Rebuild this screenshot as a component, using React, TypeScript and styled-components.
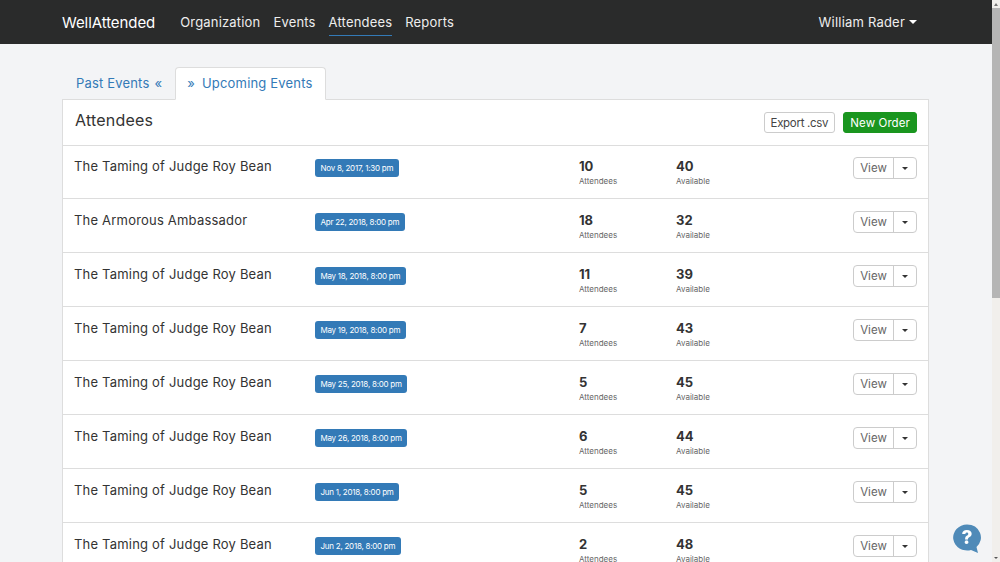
import React from 'react'
import styled, { createGlobalStyle } from 'styled-components'

const GlobalStyle = createGlobalStyle`
  body {
    margin: 0;
    background: #f3f4f6;
    color: #333;
    font-family: 'Inter', 'Liberation Sans', sans-serif;
  }
  * {
    box-sizing: border-box;
  }
`

const NavBar = styled.nav`
  height: 44px;
  background: #2a2b2b;
  display: flex;
  align-items: center;
  padding: 0 83px 0 62px;
`

const Brand = styled.a`
  color: #fff;
  font-size: 15px;
  font-weight: 400;
  letter-spacing: -0.08px;
  margin-right: 25px;
`

const NavLink = styled.a<{ $active?: boolean }>`
  color: #eee;
  font-size: 13px;
  letter-spacing: 0.18px;
  margin-right: 13px;
  padding: 6px 0 5px;
  border-bottom: 1px solid ${({ $active }) => ($active ? '#337ab7' : 'transparent')};
`

const UserMenu = styled.a`
  margin-left: auto;
  color: #eee;
  font-size: 13px;
  letter-spacing: 0.2px;
  display: flex;
  align-items: center;
  gap: 4px;
`

const Caret = styled.span<{ $color?: string; $size?: number }>`
  display: inline-block;
  border-left: ${({ $size }) => $size ?? 4}px solid transparent;
  border-right: ${({ $size }) => $size ?? 4}px solid transparent;
  border-top: ${({ $size }) => $size ?? 4}px solid ${({ $color }) => $color ?? '#333'};
`

const Main = styled.main`
  padding: 23px 71px 40px 62px;
`

const Tabs = styled.div`
  display: flex;
  margin-bottom: -1px;
  position: relative;
`

const Tab = styled.a<{ $active?: boolean }>`
  height: 33px;
  padding: 0 12px 2px ${({ $active }) => ($active ? '11px' : '13px')};
  display: flex;
  align-items: center;
  gap: ${({ $active }) => ($active ? '7px' : '5px')};
  font-size: 13px;
  letter-spacing: 0.18px;
  color: #337ab7;
  border: 1px solid ${({ $active }) => ($active ? '#ddd' : 'transparent')};
  border-bottom-color: ${({ $active }) => ($active ? '#fff' : 'transparent')};
  border-radius: 4px 4px 0 0;
  background: ${({ $active }) => ($active ? '#fff' : 'transparent')};
`

const Panel = styled.section`
  background: #fff;
  border: 1px solid #ddd;
`

const PanelHeader = styled.header`
  height: 46px;
  padding: 0 11px 0 12px;
  display: flex;
  align-items: center;
  border-bottom: 1px solid #ddd;
`

const PanelTitle = styled.h2`
  margin: 0 auto 5px 0;
  font-size: 16px;
  font-weight: 400;
  letter-spacing: 0.2px;
`

const Button = styled.a`
  height: 21px;
  padding: 0 6px;
  display: flex;
  align-items: center;
  font-size: 11.5px;
  letter-spacing: 0.1px;
  color: #444;
  background: #fff;
  border: 1px solid #ccc;
  border-radius: 3px;
`

const ExportButton = styled(Button)`
  letter-spacing: -0.3px;
`

const GreenButton = styled(Button)`
  margin-left: 8px;
  color: #fff;
  background: #1a961f;
  border-color: #1a961f;
`

const Row = styled.div`
  height: 54px;
  padding: 13px 11px 0 11px;
  display: grid;
  grid-template-columns: 241px 264px 97px 1fr auto;
  align-items: start;
  border-bottom: 1px solid #ddd;

  &:first-of-type {
    height: 53px;
    padding-top: 12px;
  }
`

const EventName = styled.div`
  font-size: 13px;
  letter-spacing: 0.2px;
  line-height: 17px;
`

const DateBadge = styled.div`
  justify-self: start;
  height: 18px;
  margin-top: 1px;
  padding: 0 5.5px;
  display: flex;
  align-items: center;
  font-size: 8px;
  letter-spacing: -0.25px;
  color: #fff;
  background: #337ab7;
  border-radius: 3px;
  white-space: nowrap;
`

const Stat = styled.div`
  display: flex;
  flex-direction: column;
`

const StatValue = styled.span`
  font-size: 13px;
  font-weight: 700;
  line-height: 17px;
`

const StatLabel = styled.span`
  margin-top: 1px;
  font-size: 8px;
  line-height: 11px;
  color: #666;
`

const SplitButton = styled.div`
  display: flex;
  height: 22px;
  margin-top: -1px;
  border: 1px solid #ccc;
  border-radius: 4px;
`

const SplitMain = styled.a`
  width: 40px;
  display: flex;
  align-items: center;
  justify-content: center;
  font-size: 11.5px;
  color: #666;
  border-right: 1px solid #ccc;
`

const SplitToggle = styled.a`
  width: 22px;
  display: flex;
  align-items: center;
  justify-content: center;
`

const HelpIcon = styled.svg`
  position: fixed;
  right: 18px;
  bottom: 8px;
  width: 30px;
  height: 30px;
`

// the page scrollbar of the reference, laid over the right edge
const ScrollTrack = styled.div`
  position: fixed;
  top: 0;
  right: 0;
  bottom: 0;
  width: 8px;
  background: #f1efec;
  display: flex;
  flex-direction: column;
  align-items: center;
`

const ScrollArrow = styled.div`
  height: 8px;
  flex: none;
  display: flex;
  align-items: center;
  justify-content: center;
`

const ScrollArrowUp = styled.span`
  border-left: 2.5px solid transparent;
  border-right: 2.5px solid transparent;
  border-bottom: 3px solid #777;
`

const ScrollThumb = styled.div`
  width: 100%;
  height: 290px;
  flex: none;
  background: #b5b5b5;
`

const ScrollSpacer = styled.div`
  flex: 1;
`

const orders = [
  { name: 'The Taming of Judge Roy Bean', date: 'Nov 8, 2017, 1:30 pm', attendees: 10, available: 40 },
  { name: 'The Armorous Ambassador', date: 'Apr 22, 2018, 8:00 pm', attendees: 18, available: 32 },
  { name: 'The Taming of Judge Roy Bean', date: 'May 18, 2018, 8:00 pm', attendees: 11, available: 39 },
  { name: 'The Taming of Judge Roy Bean', date: 'May 19, 2018, 8:00 pm', attendees: 7, available: 43 },
  { name: 'The Taming of Judge Roy Bean', date: 'May 25, 2018, 8:00 pm', attendees: 5, available: 45 },
  { name: 'The Taming of Judge Roy Bean', date: 'May 26, 2018, 8:00 pm', attendees: 6, available: 44 },
  { name: 'The Taming of Judge Roy Bean', date: 'Jun 1, 2018, 8:00 pm', attendees: 5, available: 45 },
  { name: 'The Taming of Judge Roy Bean', date: 'Jun 2, 2018, 8:00 pm', attendees: 2, available: 48 },
]

export default function App() {
  return (
    <>
      <GlobalStyle />
      <NavBar>
        <Brand>WellAttended</Brand>
        <NavLink>Organization</NavLink>
        <NavLink>Events</NavLink>
        <NavLink $active>Attendees</NavLink>
        <NavLink>Reports</NavLink>
        <UserMenu>
          William Rader <Caret $color="#fff" />
        </UserMenu>
      </NavBar>
      <Main>
        <Tabs>
          <Tab>
            <span>Past Events</span>
            <span>«</span>
          </Tab>
          <Tab $active>
            <span>»</span>
            <span>Upcoming Events</span>
          </Tab>
        </Tabs>
        <Panel>
          <PanelHeader>
            <PanelTitle>Attendees</PanelTitle>
            <ExportButton>Export .csv</ExportButton>
            <GreenButton>New Order</GreenButton>
          </PanelHeader>
          {orders.map((order) => (
            <Row key={order.date}>
              <EventName>{order.name}</EventName>
              <DateBadge>{order.date}</DateBadge>
              <Stat>
                <StatValue>{order.attendees}</StatValue>
                <StatLabel>Attendees</StatLabel>
              </Stat>
              <Stat>
                <StatValue>{order.available}</StatValue>
                <StatLabel>Available</StatLabel>
              </Stat>
              <SplitButton>
                <SplitMain>View</SplitMain>
                <SplitToggle>
                  <Caret $size={3} />
                </SplitToggle>
              </SplitButton>
            </Row>
          ))}
        </Panel>
      </Main>
      <HelpIcon viewBox="0 0 30 30">
        <path d="M15 0.5a14 13 0 1 0 4 25.500L26 29l-1.500-6A14 13 0 0 0 15 0.500z" fill="#4f8ab8" />
        <text x="15" y="20" textAnchor="middle" fontSize="19" fontWeight="800" fontFamily="Inter, sans-serif" fill="#fff">?</text>
      </HelpIcon>
      <ScrollTrack>
        <ScrollArrow>
          <ScrollArrowUp />
        </ScrollArrow>
        <ScrollThumb />
        <ScrollSpacer />
        <ScrollArrow>
          <Caret $size={2.5} $color="#555" />
        </ScrollArrow>
      </ScrollTrack>
    </>
  )
}
